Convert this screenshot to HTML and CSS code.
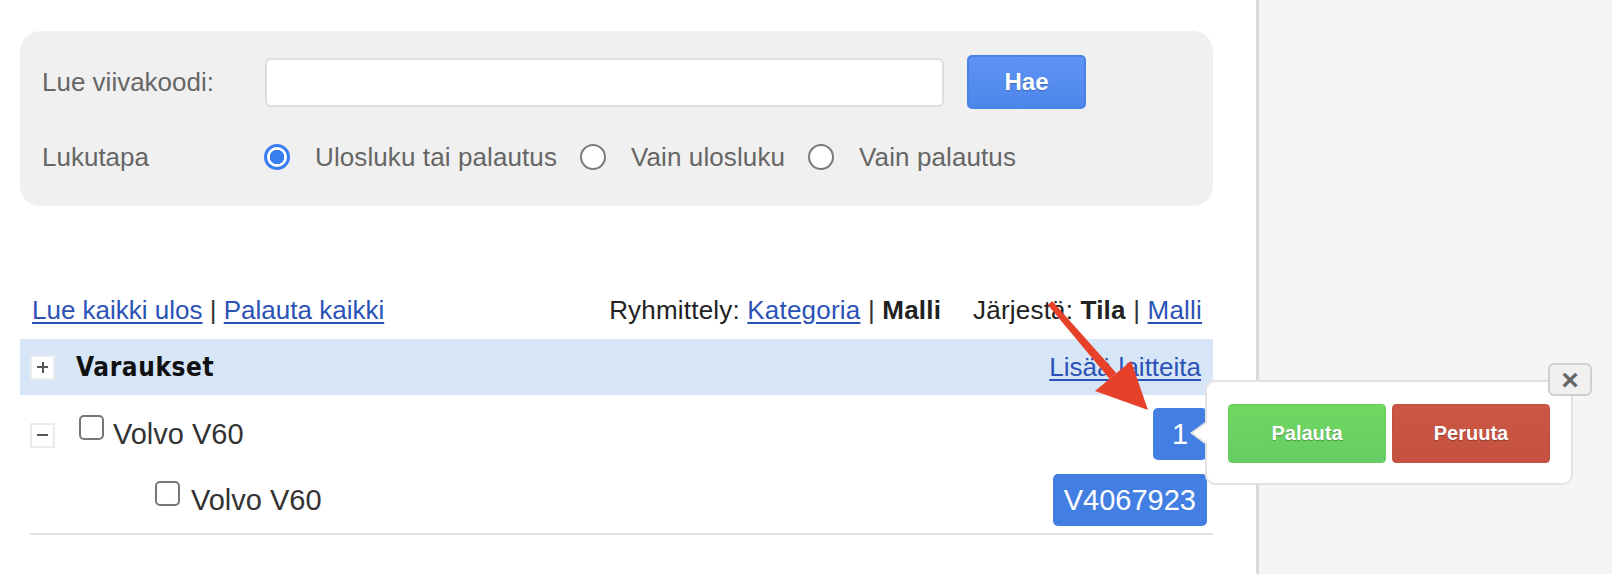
FILE: index.html
```html
<!DOCTYPE html>
<html lang="fi">
<head>
<meta charset="utf-8">
<title>Viivakoodi</title>
<link rel="stylesheet" href="styles.css">
</head>
<body>
<div class="main">
  <div class="search-panel">
    <div class="search-row">
      <span class="label">Lue viivakoodi:</span>
      <input class="barcode-input" type="text">
      <button class="btn-hae">Hae</button>
    </div>
    <div class="mode-row">
      <span class="label">Lukutapa</span>
      <div class="radios">
        <span class="radio checked"></span><span class="radio-text">Ulosluku tai palautus</span>
        <span class="radio"></span><span class="radio-text">Vain ulosluku</span>
        <span class="radio"></span><span class="radio-text">Vain palautus</span>
      </div>
    </div>
  </div>

  <div class="links-row">
    <div class="links-left">
      <a href="#" class="link">Lue kaikki ulos</a> <span class="sep">|</span> <a href="#" class="link">Palauta kaikki</a>
    </div>
    <div class="links-right">
      <span class="group">Ryhmittely: <a href="#" class="link">Kategoria</a> <span class="sep">|</span> <b>Malli</b></span>
      <span class="group">Järjestä: <b>Tila</b> <span class="sep">|</span> <a href="#" class="link">Malli</a></span>
    </div>
  </div>

  <div class="group-header">
    <span class="toggle toggle-plus" aria-label="+"></span>
    <span class="group-title">Varaukset</span>
    <a href="#" class="link add-link">Lisää laitteita</a>
  </div>

  <div class="rows">
    <div class="row">
      <span class="toggle toggle-minus" aria-label="−"></span>
      <span class="checkbox"></span>
      <span class="row-text">Volvo V60</span>
      <span class="badge badge-count">1</span>
    </div>
    <div class="row row-child">
      <span class="checkbox"></span>
      <span class="row-text">Volvo V60</span>
      <span class="badge">V4067923</span>
    </div>
  </div>
</div>
<div class="sidebar"></div>

<div class="popover">
  <button class="btn-action btn-palauta">Palauta</button>
  <button class="btn-action btn-peruuta">Peruuta</button>
  <button class="btn-close">×</button>
</div>

<svg class="annotation" width="1612" height="574" viewBox="0 0 1612 574">
  <polygon points="1052.2,301 1047.8,305 1109.7,379 1116.3,373" fill="#e8412a"/>
  <polygon points="1148,410 1131,361 1095,391" fill="#e8412a"/>
</svg>
</body>
</html>
```

FILE: styles.css
```css
* { box-sizing: border-box; }
html, body {
  margin: 0;
  padding: 0;
  width: 1612px;
  height: 574px;
  overflow: hidden;
  background: #fff;
  font-family: "Liberation Sans", Arial, sans-serif;
}
body {
  display: flex;
  position: relative;
}
.main {
  width: 1256px;
  flex: none;
  padding: 31px 43px 0 20px;
}
.sidebar {
  flex: 1;
  background: #f5f5f5;
  border-left: 3px solid #dadada;
}

/* search panel */
.search-panel {
  background: #f0f0f0;
  border-radius: 20px;
  height: 175px;
  padding: 24px 22px 0 22px;
}
.search-row {
  display: flex;
  align-items: center;
  height: 54px;
}
.label {
  width: 223px;
  flex: none;
  font-size: 26px;
  color: #666;
}
.barcode-input {
  width: 679px;
  height: 49px;
  border: 2px solid #dedede;
  border-radius: 6px;
  background: #fff;
  margin: 0;
  outline: none;
}
.btn-hae {
  margin-left: 23px;
  width: 119px;
  height: 54px;
  border: 2px solid #4b82e8;
  border-radius: 5px;
  background: linear-gradient(#5e94f4, #4d86ea);
  color: #fff;
  font-family: "Liberation Sans", Arial, sans-serif;
  font-weight: bold;
  font-size: 24px;
  text-shadow: 0 1px 1px rgba(0,0,0,0.25);
  padding: 0;
}
.mode-row {
  display: flex;
  align-items: center;
  height: 30px;
  margin-top: 33px;
}
.radios {
  display: flex;
  align-items: center;
}
.radio {
  width: 26px;
  height: 26px;
  border-radius: 50%;
  border: 2px solid #7a7a7a;
  background: #fff;
  flex: none;
  margin-left: -1px;
}
.radio.checked {
  border: 3px solid #3a7ff2;
  background: radial-gradient(circle, #3a7ff2 0 7px, #fff 7.5px);
}
.radio-text {
  font-size: 26px;
  color: #666;
  margin-left: 25px;
  margin-right: 24px;
  letter-spacing: 0.1px;
}

/* links row */
.links-row {
  margin-top: 89px;
  height: 30px;
  display: flex;
  align-items: center;
  justify-content: space-between;
  padding: 0 11px 0 12px;
  font-size: 26px;
  color: #222;
}
.link {
  color: #2b52b6;
  text-decoration: underline;
  text-underline-offset: 3px;
}
.sep { color: #333; }
.links-right {
  display: flex;
  gap: 32px;
  letter-spacing: 0.2px;
}
.group b { color: #222; }

/* group header */
.group-header {
  margin-top: 14px;
  height: 56px;
  background: #d6e6f7;
  display: flex;
  align-items: center;
  padding: 0 12px 0 10px;
}
.toggle {
  width: 25px;
  height: 25px;
  flex: none;
  background: #fff;
  border: 2px solid #ebebeb;
  position: relative;
}
.toggle::before,
.toggle-plus::after {
  content: "";
  position: absolute;
  left: 50%;
  top: 50%;
  width: 11px;
  height: 2px;
  margin: -1px 0 0 -5.5px;
  background: #555;
}
.toggle-plus::after {
  width: 2px;
  height: 11px;
  margin: -5.5px 0 0 -1px;
}
.group-title {
  margin-left: 21px;
  font-family: "DejaVu Sans Condensed", "DejaVu Sans", sans-serif;
  font-stretch: condensed;
  font-weight: bold;
  font-size: 26px;
  letter-spacing: 0.6px;
  color: #111;
  flex: 1;
}
.add-link {
  font-size: 26px;
}

/* rows */
.rows {
  margin-left: 10px;
  padding-top: 6px;
  border-bottom: 2px solid #e3e3e3;
}
.row {
  height: 66px;
  display: flex;
  align-items: center;
  padding-right: 6px;
}
.row .toggle {
  margin-top: 2px;
}
.checkbox {
  width: 25px;
  height: 25px;
  flex: none;
  border: 2px solid #767676;
  border-radius: 5px;
  background: #fff;
  margin-left: 24px;
  margin-top: -14px;
}
.row-child .checkbox {
  margin-left: 125px;
}
.row-text {
  font-size: 29px;
  color: #333;
  margin-left: 9px;
  flex: 1;
}
.row-child .row-text { margin-left: 11px; }
.badge {
  height: 52px;
  padding: 0 11px;
  border-radius: 5px;
  background: #437fe3;
  color: #fff;
  font-size: 29px;
  display: flex;
  align-items: center;
  justify-content: center;
}
.badge-count {
  width: 54px;
}

/* popover */
.popover {
  position: absolute;
  left: 1205px;
  top: 380px;
  width: 368px;
  height: 105px;
  background: #fff;
  border: 2px solid #e2e2e2;
  border-radius: 10px;
  padding: 22px 21px;
  display: flex;
  gap: 6px;
}
.popover::before {
  content: "";
  position: absolute;
  left: -17px;
  top: 40px;
  border-style: solid;
  border-width: 11px 15px 11px 0;
  border-color: transparent #e2e2e2 transparent transparent;
}
.popover::after {
  content: "";
  position: absolute;
  left: -14px;
  top: 41px;
  border-style: solid;
  border-width: 10px 14px 10px 0;
  border-color: transparent #fff transparent transparent;
}
.btn-action {
  width: 158px;
  height: 59px;
  border-radius: 4px;
  color: #fff;
  font-family: "Liberation Sans", Arial, sans-serif;
  font-weight: bold;
  font-size: 20px;
  text-shadow: 0 1px 1px rgba(0,0,0,0.3);
  padding: 0;
}
.btn-palauta {
  background: linear-gradient(#70d85f, #66cc66);
  border: 1px solid #66cc5e;
}
.btn-peruuta {
  background: linear-gradient(#cc5644, #c55140);
  border: 1px solid #c0513f;
}
.btn-close {
  position: absolute;
  left: 341px;
  top: -19px;
  width: 44px;
  height: 33px;
  background: #f0f0f0;
  border: 2px solid #cfcfcf;
  border-radius: 6px;
  color: #666;
  font-family: "Liberation Sans", Arial, sans-serif;
  font-weight: bold;
  font-size: 30px;
  line-height: 1;
  padding: 0 0 3px 0;
}

.annotation {
  position: absolute;
  left: 0;
  top: 0;
  pointer-events: none;
}
```
